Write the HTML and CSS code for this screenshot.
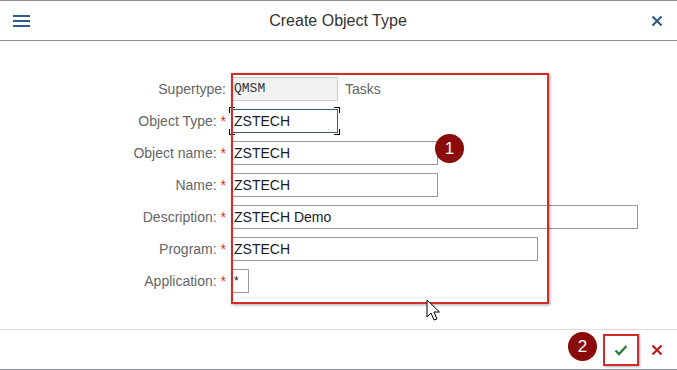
FILE: index.html
```html
<!DOCTYPE html>
<html lang="en">
<head>
    <meta charset="UTF-8">
    <title>Create Object Type</title>
    <link rel="stylesheet" href="styles.css">
</head>
<body>
    <div class="dialog">
        <header class="header">
            <svg class="menu-icon" width="18" height="14" viewBox="0 0 18 14">
                <rect x="0" y="1" width="17" height="2" fill="#2f5c8a"/>
                <rect x="0" y="6" width="17" height="2" fill="#2f5c8a"/>
                <rect x="0" y="11" width="17" height="2" fill="#2f5c8a"/>
            </svg>
            <h1 class="title">Create Object Type</h1>
            <svg class="close-icon" width="12" height="12" viewBox="0 0 12 12">
                <path d="M1.5 1.5 L10.5 10.5 M10.5 1.5 L1.5 10.5" stroke="#2f5c8a" stroke-width="2.2"/>
            </svg>
        </header>

        <main class="content">
            <div class="form">
                <label class="label">Supertype:<span class="noreq"></span></label>
                <div class="field">
                    <div class="input readonly w107 mono">QMSM</div>
                    <span class="desc">Tasks</span>
                </div>

                <label class="label">Object Type: <span class="req">*</span></label>
                <div class="field">
                    <div class="input focused w107">ZSTECH</div>
                </div>

                <label class="label">Object name: <span class="req">*</span></label>
                <div class="field"><div class="input w207">ZSTECH</div></div>

                <label class="label">Name: <span class="req">*</span></label>
                <div class="field"><div class="input w207">ZSTECH</div></div>

                <label class="label">Description: <span class="req">*</span></label>
                <div class="field"><div class="input w407">ZSTECH Demo</div></div>

                <label class="label">Program: <span class="req">*</span></label>
                <div class="field"><div class="input w307">ZSTECH</div></div>

                <label class="label">Application: <span class="req">*</span></label>
                <div class="field"><div class="input w17">*</div></div>
            </div>

            <div class="highlight"></div>
            <div class="badge badge-1">1</div>
            <svg class="cursor" width="16" height="24" viewBox="0 0 16 24">
                <path d="M1 1 L1 18 L5 14 L8 21 L11 20 L8 13 L13.5 13 Z" fill="#fff" stroke="#000" stroke-width="1"/>
            </svg>
        </main>

        <footer class="footer">
            <div class="badge badge-2">2</div>
            <button class="btn ok">
                <svg width="14" height="12" viewBox="0 0 14 12">
                    <path d="M1.5 6.5 L5 10 L12.5 2" fill="none" stroke="#2b7d3e" stroke-width="2.4"/>
                </svg>
            </button>
            <button class="btn cancel">
                <svg width="12" height="12" viewBox="0 0 12 12">
                    <path d="M1.5 1.5 L10.5 10.5 M10.5 1.5 L1.5 10.5" stroke="#bb1b1b" stroke-width="2.2"/>
                </svg>
            </button>
        </footer>
    </div>
</body>
</html>
```

FILE: styles.css
```css
body {
    margin: 0;
    font-family: "Liberation Sans", Arial, sans-serif;
    background-color: white;
}
.dialog {
    width: 677px;
    height: 370px;
    box-sizing: border-box;
    border-top: 1px solid #8a9299;
    border-bottom: 1px solid #8a9299;
    display: flex;
    flex-direction: column;
}
.header {
    height: 39px;
    border-bottom: 1px solid #8a9299;
    display: flex;
    align-items: center;
    padding: 0 14px 0 13px;
}
.menu-icon {
    display: block;
}
.title {
    flex: 1;
    margin: 0;
    text-align: center;
    font-size: 16px;
    font-weight: normal;
    color: #333;
    padding-right: 6px;
}
.close-icon {
    display: block;
}
.content {
    position: relative;
    flex: 1;
    padding-top: 36px;
}
.form {
    display: grid;
    grid-template-columns: 226px auto;
    column-gap: 5px;
    row-gap: 8px;
}
.label {
    font-size: 14px;
    color: #666;
    text-align: right;
    line-height: 24px;
    white-space: nowrap;
}
.req {
    color: #d42a2a;
}
.field {
    display: flex;
    align-items: center;
    height: 24px;
}
.input {
    box-sizing: border-box;
    height: 24px;
    border: 1px solid #999;
    padding-left: 2px;
    font-size: 14px;
    line-height: 22px;
    color: #1a1a1a;
    white-space: nowrap;
}
.mono {
    font-family: "Liberation Mono", monospace;
    font-size: 13px;
    color: #333;
}
.readonly {
    background-color: #f2f2f2;
    border-color: #ccc;
}
.focused {
    position: relative;
    border-color: #3e5c6b;
}
.focused::before {
    content: "";
    position: absolute;
    top: -3px;
    left: -3px;
    right: -3px;
    bottom: -3px;
    background:
        linear-gradient(#000, #000) left top / 6px 1px no-repeat,
        linear-gradient(#000, #000) left top / 1px 6px no-repeat,
        linear-gradient(#000, #000) right top / 6px 1px no-repeat,
        linear-gradient(#000, #000) right top / 1px 6px no-repeat,
        linear-gradient(#000, #000) left bottom / 6px 1px no-repeat,
        linear-gradient(#000, #000) left bottom / 1px 6px no-repeat,
        linear-gradient(#000, #000) right bottom / 6px 1px no-repeat,
        linear-gradient(#000, #000) right bottom / 1px 6px no-repeat;
}
.w107 { width: 107px; }
.w207 { width: 207px; }
.w307 { width: 307px; }
.w407 { width: 407px; }
.w17 { width: 18px; font-size: 12px; }
.desc {
    margin-left: 7px;
    font-size: 14px;
    color: #666;
}
.highlight {
    position: absolute;
    left: 231px;
    top: 32px;
    width: 314px;
    height: 227px;
    border: 2px solid #d42a2a;
    box-shadow: 1px 1px 3px rgba(0, 0, 0, 0.35);
}
.badge {
    width: 29px;
    height: 29px;
    border-radius: 50%;
    background-color: #8b0a0a;
    color: white;
    font-size: 17px;
    line-height: 29px;
    text-align: center;
}
.badge-1 {
    position: absolute;
    left: 435px;
    top: 93px;
}
.cursor {
    position: absolute;
    left: 426px;
    top: 258px;
}
.footer {
    height: 39px;
    border-top: 1px solid #ddd;
    display: flex;
    align-items: center;
    justify-content: flex-end;
    padding-right: 11px;
}
.badge-2 {
    margin-right: 6px;
    margin-top: -7px;
}
.btn {
    background: none;
    border: none;
    padding: 0;
    display: flex;
    align-items: center;
    justify-content: center;
    cursor: pointer;
}
.ok {
    width: 36px;
    height: 32px;
    border: 2px solid #d42a2a;
    box-shadow: 1px 1px 2px rgba(0, 0, 0, 0.3);
    margin-right: 9px;
    margin-top: 0;
}
.cancel {
    width: 18px;
    height: 20px;
}
```
